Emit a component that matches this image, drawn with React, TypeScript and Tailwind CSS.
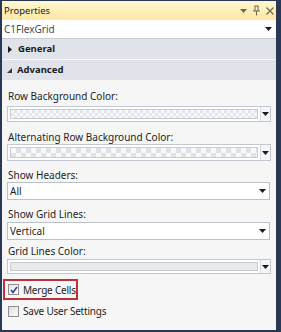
import React from 'react';

const font = { fontFamily: '"Noto Sans", "Open Sans", sans-serif' };

function Arrow() {
    return (
        <svg width="7" height="4" viewBox="0 0 7 4" className="block shrink-0">
            <path d="M0 0 L7 0 L3.5 4 Z" fill="#1b1b1b" />
        </svg>
    );
}

function ColorBox({ pattern, h }: { pattern: 'small' | 'big' | 'none'; h: string }) {
    const fill =
        pattern === 'small'
            ? 'bg-[repeating-conic-gradient(#e2e5ea_0%_25%,#f8f9fa_0%_50%)] bg-[length:6px_6px]'
            : pattern === 'big'
                ? 'bg-[repeating-conic-gradient(#dfe2e7_0%_25%,#f8f9fa_0%_50%)] bg-[length:10px_10px]'
                : 'bg-[#e9eaec]';
    return (
        <div className={`ml-[5px] mr-[5px] flex ${h} border border-[#c3c8d0] bg-white`}>
            <div className="flex-1 p-[2px]">
                <div className={`h-full border border-[#c8cbd0] ${fill}`} />
            </div>
            <div className="flex w-[10px] items-center justify-center border-l border-[#d6dae0] bg-[#f4f5f7]">
                <Arrow />
            </div>
        </div>
    );
}

function Select({ value }: { value: string }) {
    return (
        <div className="ml-[5px] mr-[6px] flex h-[18px] items-center justify-between border border-[#bcc1c9] bg-white pl-[2px] pr-[3px] text-[10px] leading-[14px] text-[#1e1e1e]">
            <span>{value}</span>
            <Arrow />
        </div>
    );
}

function Label({ children }: { children: React.ReactNode }) {
    return <div className="h-[14px] whitespace-nowrap px-[6px] text-[10px] leading-[14px] text-[#1e1e1e]">{children}</div>;
}

export default function App() {
    return (
        <div className="h-[332px] w-[281px] overflow-hidden bg-[#293955] pl-[2px] pr-[5px] pt-[1px]" style={font}>
            {/* title */}
            <div className="flex h-[19px] items-center justify-between bg-gradient-to-b from-[#fff6d2] to-[#fde7a2] pl-[2px] pr-[2px] text-[9.5px] leading-[14px] text-[#1b1b1b]">
                <span>Properties</span>
                <div className="flex items-center gap-[6px]">
                    <svg width="7" height="4" viewBox="0 0 7 4"><path d="M0 0 L7 0 L3.5 4 Z" fill="#6d6852" /></svg>
                    <svg width="7" height="11" viewBox="0 0 7 11">
                        <path d="M1.5 1 H5.5 M2 1 V6 M5 1 V6 M0 6 H7 M3.5 6 V10.5" stroke="#6d6852" strokeWidth="1" fill="none" />
                    </svg>
                    <svg width="8" height="8" viewBox="0 0 8 8">
                        <path d="M0.5 0.5 L7.5 7.5 M7.5 0.5 L0.5 7.5" stroke="#6d6852" strokeWidth="1.2" />
                    </svg>
                </div>
            </div>

            {/* object combo */}
            <div className="flex h-[19px] items-center justify-between border-b border-[#c8ccd4] bg-white pl-[2px] pr-[4px] text-[10px] leading-[14px] text-[#4a4a4a]">
                <span>C1FlexGrid</span>
                <Arrow />
            </div>

            <div className="flex h-[291px] flex-col bg-[#f6f6f6]">
                <div className="flex h-[20px] items-center gap-[6px] bg-[#e0e4ea] pl-[6px] text-[9.5px] font-bold leading-[14px] text-[#1b1b1b]">
                    <svg width="4" height="7" viewBox="0 0 4 7"><path d="M0 0 L4 3.5 L0 7 Z" fill="#1b1b1b" /></svg>
                    <span>General</span>
                </div>
                <div className="mt-[1px] flex h-[20px] items-center gap-[5px] bg-[#e0e4ea] pl-[5px] text-[9.5px] font-bold leading-[14px] text-[#1b1b1b]">
                    <svg width="5" height="5" viewBox="0 0 5 5"><path d="M5 0 L5 5 L0 5 Z" fill="#3a3a3a" /></svg>
                    <span>Advanced</span>
                </div>

                <div className="mt-[9px]"><Label>Row Background Color:</Label></div>
                <div className="mt-[3px]"><ColorBox pattern="small" h="h-[16px]" /></div>

                <div className="mt-[8px]"><Label>Alternating Row Background Color:</Label></div>
                <div className="mt-[0px]"><ColorBox pattern="big" h="h-[17px]" /></div>

                <div className="mt-[7px]"><Label>Show Headers:</Label></div>
                <div className="mt-[0px]"><Select value="All" /></div>

                <div className="mt-[7px]"><Label>Show Grid Lines:</Label></div>
                <div className="mt-[1px]"><Select value="Vertical" /></div>

                <div className="mt-[4px]"><Label>Grid Lines Color:</Label></div>
                <div className="mt-[1px]"><ColorBox pattern="none" h="h-[15px]" /></div>

                <div className="ml-[1px] mt-[5px] flex h-[21px] w-[75px] items-center gap-[4px] border-2 border-[#c0303c] pl-[3px] text-[10px] leading-[14px] tracking-[-0.2px] text-[#1e1e1e]">
                    <div className="flex h-[11px] w-[11px] shrink-0 items-center justify-center border border-[#8e8f8f] bg-gradient-to-br from-[#e4e4e4] to-[#ffffff]">
                        <svg width="8" height="8" viewBox="0 0 8 8">
                            <path d="M1 4 L3 6.5 L7 1" stroke="#2c3f8c" strokeWidth="1.5" fill="none" />
                        </svg>
                    </div>
                    <span className="whitespace-nowrap">Merge Cells</span>
                </div>

                <div className="ml-[3px] mt-[3px] flex h-[16px] items-center gap-[4px] pl-[3px] text-[10px] leading-[14px] tracking-[-0.2px] text-[#1e1e1e]">
                    <div className="h-[11px] w-[11px] shrink-0 border border-[#8e8f8f] bg-gradient-to-br from-[#e0e0e0] to-[#fbfbfb]" />
                    <span className="whitespace-nowrap">Save User Settings</span>
                </div>
            </div>
        </div>
    );
}
